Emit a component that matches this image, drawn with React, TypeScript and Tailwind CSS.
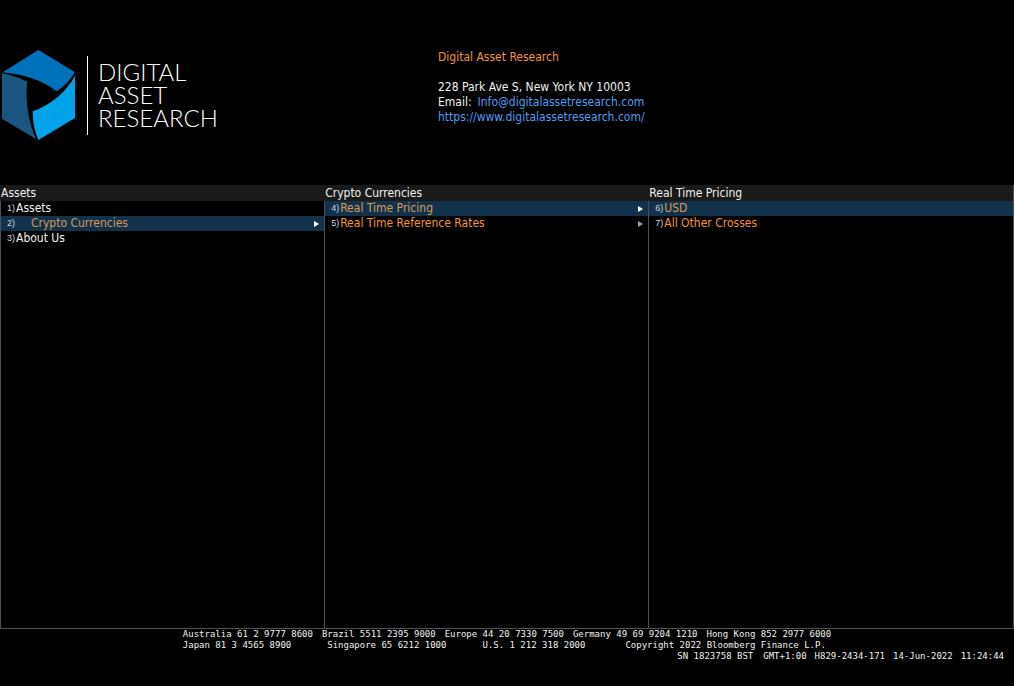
import { useState } from "react";

type Item = { key: number; label: string; tone: string; indent?: boolean; arrow?: string };
type Column = { title: string; initial: number | null; width: string; items: Item[] };

const columns: Column[] = [
  {
    title: "Assets",
    initial: 2,
    width: "w-[32%]",
    items: [
      { key: 1, label: "Assets", tone: "text-[#f2f2f2]" },
      { key: 2, label: "Crypto Currencies", tone: "text-[#d8965a]", indent: true, arrow: "text-white" },
      { key: 3, label: "About Us", tone: "text-[#f2f2f2]" },
    ],
  },
  {
    title: "Crypto Currencies",
    initial: 4,
    width: "w-[32%]",
    items: [
      { key: 4, label: "Real Time Pricing", tone: "text-[#dc9a58]", arrow: "text-white" },
      { key: 5, label: "Real Time Reference Rates", tone: "text-[#f0953a]", arrow: "text-[#a0a0a0]" },
    ],
  },
  {
    title: "Real Time Pricing",
    initial: 6,
    width: "flex-1",
    items: [
      { key: 6, label: "USD", tone: "text-[#dc9a58]" },
      { key: 7, label: "All Other Crosses", tone: "text-[#f0953a]" },
    ],
  },
];

function Logo() {
  return (
    <div className="flex items-center gap-[9px]">
      <svg viewBox="0 0 234 276" className="h-[92px] w-[78px]" aria-hidden="true">
        <path d="M115 3 L224 69 Q206 104 170 127 Q105 78 8 70 Z" fill="#0072bc" />
        <path d="M225 80 V207 L115 273 Q97 230 98 187 Q184 155 225 80 Z" fill="#00a2e8" />
        <path d="M6 73 Q48 81 81 98 Q73 190 108 270 L6 209 Z" fill="#1b5680" />
      </svg>
      <div className="border-l border-white pt-[4px] pb-[6px] pl-[10px] font-['Lato'] text-[24px] leading-[23px] font-light text-white">
        <div>DIGITAL</div>
        <div>ASSET</div>
        <div>RESEARCH</div>
      </div>
    </div>
  );
}

function MenuColumn({ column }: { column: Column }) {
  const [selected, setSelected] = useState(column.initial);
  return (
    <section className={`flex flex-col ${column.width}`}>
      <h2 className="h-4 bg-[#1a1a1a] px-px leading-4 text-[#f2f2f2]">{column.title}</h2>
      <ul className="flex-1 border-l border-[#505050]">
        {column.items.map((item) => (
          <li key={item.key}>
            <button
              type="button"
              onClick={() => setSelected(item.key)}
              className={`flex h-[15px] w-full items-center pr-[5px] pl-[6px] text-left leading-[15px] ${
                selected === item.key ? "bg-[#11324a]" : ""
              }`}
            >
              <span className="w-[9px] shrink-0 font-['Liberation_Sans_Narrow','Liberation_Sans',sans-serif] text-[9px] text-[#d0d8e0]">
                {item.key})
              </span>
              <span className={`flex-1 ${item.indent ? "pl-[15px]" : ""} ${item.tone}`}>{item.label}</span>
              {item.arrow && (
                <svg viewBox="0 0 5 6" className={`h-[6px] w-[5px] ${item.arrow}`} aria-hidden="true">
                  <path d="M0 0 L5 3 L0 6 Z" fill="currentColor" />
                </svg>
              )}
            </button>
          </li>
        ))}
      </ul>
    </section>
  );
}

export default function App() {
  return (
    <div className="flex min-h-screen flex-col bg-black font-['DejaVu_Sans_Condensed','DejaVu_Sans',sans-serif] text-[12px] text-[#f2f2f2]">
      <header className="flex h-[185px] shrink-0 items-start pt-[49px]">
        <div className="w-[438px] shrink-0">
          <Logo />
        </div>
        <address className="leading-[15px] not-italic">
          <h1 className="mt-px mb-[15px] text-[#f0953a]">Digital Asset Research</h1>
          <p>228 Park Ave S, New York NY 10003</p>
          <p className="flex gap-[6px]">
            <span>Email:</span>
            <a href="mailto:Info@digitalassetresearch.com" className="text-[#4c9ff0]">
              Info@digitalassetresearch.com
            </a>
          </p>
          <p>
            <a href="https://www.digitalassetresearch.com/" className="text-[#4c9ff0]">
              https://www.digitalassetresearch.com/
            </a>
          </p>
        </address>
      </header>
      <main className="flex flex-1 border-r border-b border-[#505050]">
        {columns.map((column) => (
          <MenuColumn key={column.title} column={column} />
        ))}
      </main>
      <footer className="flex h-[57px] flex-col font-['DejaVu_Sans_Mono',monospace] text-[9px] leading-[11px] whitespace-nowrap">
        <div className="mx-auto">
          <p className="flex gap-[9px]">
            <span>Australia 61 2 9777 8600</span>
            <span>Brazil 5511 2395 9000</span>
            <span>Europe 44 20 7330 7500</span>
            <span>Germany 49 69 9204 1210</span>
            <span>Hong Kong 852 2977 6000</span>
          </p>
          <p className="flex gap-9">
            <span>Japan 81 3 4565 8900</span>
            <span>Singapore 65 6212 1000</span>
            <span>U.S. 1 212 318 2000</span>
            <span className="pl-1">Copyright 2022 Bloomberg Finance L.P.</span>
          </p>
        </div>
        <p className="flex justify-end gap-2 pr-[10px]">
          <span>SN 1823758 BST</span>
          <span className="pl-0.5">GMT+1:00</span>
          <span>H829-2434-171</span>
          <span>14-Jun-2022</span>
          <span>11:24:44</span>
        </p>
      </footer>
    </div>
  );
}
